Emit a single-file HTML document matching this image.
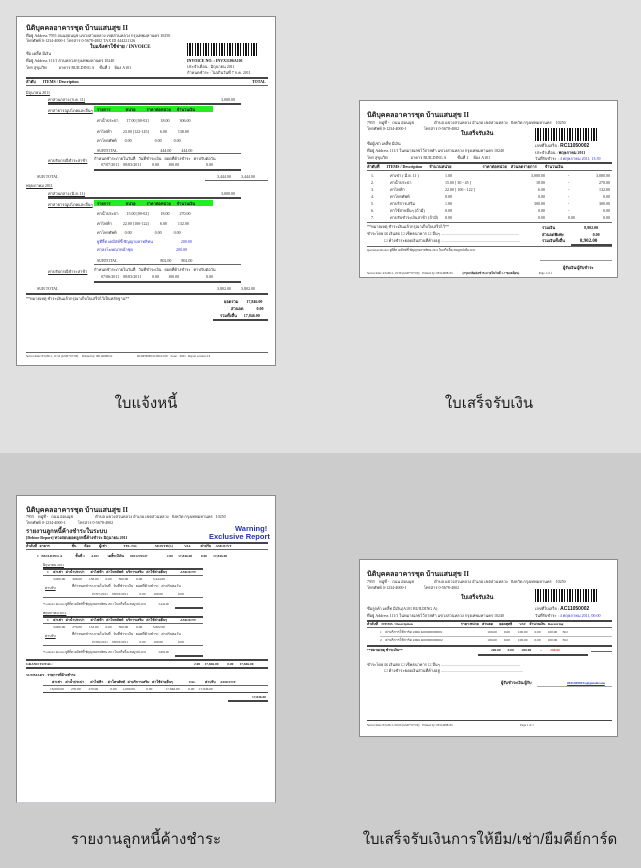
<!DOCTYPE html>
<html><head><meta charset="utf-8"><style>
*{margin:0;padding:0;box-sizing:border-box}
body{width:641px;height:868px;position:relative;overflow:hidden;background:#e0e0e0;font-family:"Liberation Serif",serif}
.bot{position:absolute;left:0;top:453px;width:641px;height:415px;background:#cccccc}
.doc{position:absolute;background:#fff;border:1px solid #8a8a8a;overflow:hidden}
.t{position:absolute;white-space:nowrap;font-size:4px;line-height:5px;color:#222}
.b{font-weight:bold;color:#111}
.h{position:absolute;font-size:7px;font-weight:bold;color:#222;white-space:nowrap}
.l{position:absolute;height:1px;background:#666}
.L{position:absolute;height:2px;background:#444}
.g{position:absolute;background:#22ee22}
.bc{position:absolute;background:repeating-linear-gradient(90deg,#111 0 1px,#fff 1px 2px,#111 2px 4px,#fff 4px 5px,#111 5px 6px,#fff 6px 8px)}
.lab{position:absolute;font-family:"Liberation Sans","DejaVu Sans",sans-serif;font-size:15px;color:#1a1a1a;text-align:center;width:260px}
.bl{color:#2a2acc}
</style></head><body>
<div class="bot"></div>

<!-- Doc 1 -->
<div class="doc" style="left:16px;top:16px;width:260px;height:350px">
<div class="h" style="left:9px;top:6px">นิติบุคคลอาคารชุด บ้านแสนสุข II</div>
<div class="t" style="left:9px;top:16px">ที่อยู่ Address 7955 ถนนอ่อนนุช แขวงสวนหลวง เขตสวนหลวง กรุงเทพมหานคร 10250</div>
<div class="t" style="left:9px;top:21px">โทรศัพท์ 0-1234-4000-1 โทรสาร 0-5678-4002 TAX ID 444221126</div>
<div class="bc" style="left:170px;top:26px;width:71px;height:13px"></div>
<div class="t b" style="left:73px;top:28px;font-size:5px">ใบแจ้งค่าใช้จ่าย / INVOICE</div>
<div class="t" style="left:9px;top:34px">ชื่อ เคลิ้ท มีเงิน</div>
<div class="t" style="left:9px;top:41px">ที่อยู่ Address 111/1 สวนหลวงกรุงเทพมหานคร 10240</div>
<div class="t" style="left:9px;top:48px">โทร สุขุมวิท &nbsp;&nbsp;&nbsp;&nbsp;&nbsp;&nbsp;&nbsp;&nbsp;&nbsp;&nbsp; อาคาร BUILDING A &nbsp;&nbsp;&nbsp; ชั้นที่ 1 &nbsp;&nbsp; ห้อง A101</div>
<div class="t b" style="left:170px;top:41px">INVOICE NO. : INVX1106A101</div>
<div class="t" style="left:170px;top:47px">ประจำเดือน : มิถุนายน 2011</div>
<div class="t" style="left:170px;top:53px">กำหนดชำระ : ไม่เกินวันที่ 7 ก.ค. 2011</div>
<div class="L" style="left:9px;top:60px;width:242px"></div>
<div class="t b" style="left:9px;top:62px">ลำดับ &nbsp;&nbsp;&nbsp;&nbsp;&nbsp; ITEMS / Description</div>
<div class="t b" style="left:235px;top:62px">TOTAL</div>
<div class="l" style="left:9px;top:68px;width:242px"></div>
<div class="t" style="left:9px;top:73px;text-decoration:underline">มิถุนายน 2011</div>
<div class="t" style="left:31px;top:80px;text-decoration:underline">ค่าส่วนกลาง (ก.ค. 11)</div>
<div class="t" style="left:204px;top:80px">3,000.00</div>
<div class="L" style="left:31px;top:86px;width:193px"></div>
<div class="t" style="left:31px;top:91px;text-decoration:underline">ค่าสาธารณูปโภคและอื่นๆ</div>
<div class="g" style="left:77px;top:89px;width:119px;height:6px"></div>
<div class="t b" style="left:80px;top:90px">รายการ &nbsp;&nbsp;&nbsp;&nbsp;&nbsp;&nbsp;&nbsp;&nbsp;&nbsp;&nbsp;&nbsp;&nbsp;&nbsp; หน่วย &nbsp;&nbsp;&nbsp;&nbsp;&nbsp;&nbsp;&nbsp;&nbsp;&nbsp; ราคาต่อหน่วย &nbsp;&nbsp;&nbsp;&nbsp; จำนวนเงิน</div>
<div class="t" style="left:80px;top:101px">ค่าน้ำประปา &nbsp;&nbsp;&nbsp;&nbsp;&nbsp;&nbsp; 17.00 [00-02] &nbsp;&nbsp;&nbsp;&nbsp;&nbsp;&nbsp;&nbsp;&nbsp;&nbsp;&nbsp; 18.00 &nbsp;&nbsp;&nbsp;&nbsp;&nbsp;&nbsp;&nbsp;&nbsp; 306.00</div>
<div class="t" style="left:80px;top:112px">ค่าไฟฟ้า &nbsp;&nbsp;&nbsp;&nbsp;&nbsp;&nbsp;&nbsp;&nbsp;&nbsp; 23.00 [122-145] &nbsp;&nbsp;&nbsp;&nbsp;&nbsp;&nbsp;&nbsp;&nbsp;&nbsp; 6.00 &nbsp;&nbsp;&nbsp;&nbsp;&nbsp;&nbsp;&nbsp;&nbsp;&nbsp; 138.00</div>
<div class="t" style="left:80px;top:121px">ค่าโทรศัพท์ &nbsp;&nbsp;&nbsp;&nbsp;&nbsp;&nbsp; 0.00 &nbsp;&nbsp;&nbsp;&nbsp;&nbsp;&nbsp;&nbsp;&nbsp;&nbsp;&nbsp;&nbsp;&nbsp;&nbsp;&nbsp;&nbsp;&nbsp;&nbsp;&nbsp;&nbsp;&nbsp;&nbsp; 0.00 &nbsp;&nbsp;&nbsp;&nbsp;&nbsp;&nbsp;&nbsp;&nbsp;&nbsp;&nbsp; 0.00</div>
<div class="t" style="left:80px;top:131px">SUBTOTAL &nbsp;&nbsp;&nbsp;&nbsp;&nbsp;&nbsp;&nbsp;&nbsp;&nbsp;&nbsp;&nbsp;&nbsp;&nbsp;&nbsp;&nbsp;&nbsp;&nbsp;&nbsp;&nbsp;&nbsp;&nbsp;&nbsp;&nbsp;&nbsp;&nbsp;&nbsp;&nbsp;&nbsp;&nbsp;&nbsp;&nbsp;&nbsp;&nbsp;&nbsp;&nbsp;&nbsp;&nbsp;&nbsp;&nbsp;&nbsp;&nbsp; 444.00 &nbsp;&nbsp;&nbsp;&nbsp;&nbsp;&nbsp;&nbsp;&nbsp; 444.00</div>
<div class="l" style="left:77px;top:136px;width:147px"></div>
<div class="t" style="left:31px;top:141px;text-decoration:underline">ค่าปรับกรณีชำระล่าช้า</div>
<div class="t" style="left:77px;top:139px">กำหนดชำระภายในวันที่ &nbsp; วันที่ชำระเงิน &nbsp; ยอดที่ค้างชำระ &nbsp; ค่าปรับต่อวัน</div>
<div class="t" style="left:84px;top:145px">07/07/2011 &nbsp;&nbsp; 08/03/2011 &nbsp;&nbsp;&nbsp;&nbsp;&nbsp;&nbsp;&nbsp;&nbsp;&nbsp; 0.00 &nbsp;&nbsp;&nbsp;&nbsp;&nbsp;&nbsp;&nbsp; 100.00 &nbsp;&nbsp;&nbsp;&nbsp;&nbsp;&nbsp;&nbsp;&nbsp;&nbsp;&nbsp;&nbsp;&nbsp;&nbsp;&nbsp;&nbsp;&nbsp;&nbsp;&nbsp;&nbsp;&nbsp;&nbsp;&nbsp;&nbsp;&nbsp;&nbsp; 0.00</div>
<div class="L" style="left:77px;top:152px;width:147px"></div>
<div class="t" style="left:20px;top:157px">SUB TOTAL</div>
<div class="t" style="left:200px;top:157px">3,444.00 &nbsp;&nbsp;&nbsp;&nbsp;&nbsp;&nbsp;&nbsp;&nbsp; 3,444.00</div>
<div class="l" style="left:188px;top:163px;width:63px"></div>
<div class="t" style="left:9px;top:166px;text-decoration:underline">พฤษภาคม 2011</div>
<div class="t" style="left:31px;top:174px;text-decoration:underline">ค่าส่วนกลาง (มิ.ย. 11)</div>
<div class="t" style="left:204px;top:174px">3,000.00</div>
<div class="L" style="left:31px;top:180px;width:193px"></div>
<div class="t" style="left:31px;top:185px;text-decoration:underline">ค่าสาธารณูปโภคและอื่นๆ</div>
<div class="g" style="left:77px;top:183px;width:119px;height:6px"></div>
<div class="t b" style="left:80px;top:184px">รายการ &nbsp;&nbsp;&nbsp;&nbsp;&nbsp;&nbsp;&nbsp;&nbsp;&nbsp;&nbsp;&nbsp;&nbsp;&nbsp; หน่วย &nbsp;&nbsp;&nbsp;&nbsp;&nbsp;&nbsp;&nbsp;&nbsp;&nbsp; ราคาต่อหน่วย &nbsp;&nbsp;&nbsp;&nbsp; จำนวนเงิน</div>
<div class="t" style="left:80px;top:194px">ค่าน้ำประปา &nbsp;&nbsp;&nbsp;&nbsp;&nbsp;&nbsp; 15.00 [00-02] &nbsp;&nbsp;&nbsp;&nbsp;&nbsp;&nbsp;&nbsp;&nbsp;&nbsp;&nbsp; 18.00 &nbsp;&nbsp;&nbsp;&nbsp;&nbsp;&nbsp;&nbsp;&nbsp; 270.00</div>
<div class="t" style="left:80px;top:204px">ค่าไฟฟ้า &nbsp;&nbsp;&nbsp;&nbsp;&nbsp;&nbsp;&nbsp;&nbsp;&nbsp; 22.00 [100-122] &nbsp;&nbsp;&nbsp;&nbsp;&nbsp;&nbsp;&nbsp;&nbsp;&nbsp; 6.00 &nbsp;&nbsp;&nbsp;&nbsp;&nbsp;&nbsp;&nbsp;&nbsp;&nbsp; 132.00</div>
<div class="t" style="left:80px;top:213px">ค่าโทรศัพท์ &nbsp;&nbsp;&nbsp;&nbsp;&nbsp;&nbsp; 0.00 &nbsp;&nbsp;&nbsp;&nbsp;&nbsp;&nbsp;&nbsp;&nbsp;&nbsp;&nbsp;&nbsp;&nbsp;&nbsp;&nbsp;&nbsp;&nbsp;&nbsp;&nbsp;&nbsp;&nbsp;&nbsp; 0.00 &nbsp;&nbsp;&nbsp;&nbsp;&nbsp;&nbsp;&nbsp;&nbsp;&nbsp;&nbsp; 0.00</div>
<div class="t bl" style="left:80px;top:222px">ยูทีลิ้ท เคมีสท์ขี้ ซัญญาผลาทลิทน &nbsp;&nbsp;&nbsp;&nbsp;&nbsp;&nbsp;&nbsp;&nbsp;&nbsp;&nbsp;&nbsp;&nbsp;&nbsp;&nbsp;&nbsp;&nbsp;&nbsp;&nbsp;&nbsp;&nbsp;&nbsp;&nbsp;&nbsp;&nbsp;&nbsp;&nbsp; 200.00</div>
<div class="t bl" style="left:80px;top:230px">ค่าลงโฆษณาหน้าชุด &nbsp;&nbsp;&nbsp;&nbsp;&nbsp;&nbsp;&nbsp;&nbsp;&nbsp;&nbsp;&nbsp;&nbsp;&nbsp;&nbsp;&nbsp;&nbsp;&nbsp;&nbsp;&nbsp;&nbsp;&nbsp;&nbsp;&nbsp;&nbsp;&nbsp;&nbsp;&nbsp;&nbsp;&nbsp;&nbsp;&nbsp;&nbsp;&nbsp;&nbsp;&nbsp;&nbsp;&nbsp;&nbsp;&nbsp;&nbsp;&nbsp; 200.00</div>
<div class="t" style="left:80px;top:241px">SUBTOTAL &nbsp;&nbsp;&nbsp;&nbsp;&nbsp;&nbsp;&nbsp;&nbsp;&nbsp;&nbsp;&nbsp;&nbsp;&nbsp;&nbsp;&nbsp;&nbsp;&nbsp;&nbsp;&nbsp;&nbsp;&nbsp;&nbsp;&nbsp;&nbsp;&nbsp;&nbsp;&nbsp;&nbsp;&nbsp;&nbsp;&nbsp;&nbsp;&nbsp;&nbsp;&nbsp;&nbsp;&nbsp;&nbsp;&nbsp;&nbsp;&nbsp; 802.00 &nbsp;&nbsp;&nbsp;&nbsp;&nbsp;&nbsp;&nbsp;&nbsp; 802.00</div>
<div class="l" style="left:77px;top:247px;width:147px"></div>
<div class="t" style="left:31px;top:252px;text-decoration:underline">ค่าปรับกรณีชำระล่าช้า</div>
<div class="t" style="left:77px;top:250px">กำหนดชำระภายในวันที่ &nbsp; วันที่ชำระเงิน &nbsp; ยอดที่ค้างชำระ &nbsp; ค่าปรับต่อวัน</div>
<div class="t" style="left:84px;top:257px">07/06/2011 &nbsp;&nbsp; 08/03/2011 &nbsp;&nbsp;&nbsp;&nbsp;&nbsp;&nbsp;&nbsp;&nbsp;&nbsp; 0.00 &nbsp;&nbsp;&nbsp;&nbsp;&nbsp;&nbsp;&nbsp; 100.00 &nbsp;&nbsp;&nbsp;&nbsp;&nbsp;&nbsp;&nbsp;&nbsp;&nbsp;&nbsp;&nbsp;&nbsp;&nbsp;&nbsp;&nbsp;&nbsp;&nbsp;&nbsp;&nbsp;&nbsp;&nbsp;&nbsp;&nbsp;&nbsp;&nbsp; 0.00</div>
<div class="L" style="left:77px;top:264px;width:147px"></div>
<div class="t" style="left:20px;top:269px">SUB TOTAL</div>
<div class="t" style="left:200px;top:269px">3,802.00 &nbsp;&nbsp;&nbsp;&nbsp;&nbsp;&nbsp;&nbsp;&nbsp; 3,802.00</div>
<div class="L" style="left:9px;top:276px;width:242px"></div>
<div class="t" style="left:9px;top:279px">**หมายเหตุ ชำระเงินแล้วกรุณาเก็บใบเสร็จไว้เป็นหลักฐาน**</div>
<div class="t b" style="left:207px;top:282px">ยอดรวม &nbsp;&nbsp;&nbsp;&nbsp;&nbsp;&nbsp; 17,846.00</div>
<div class="t b" style="left:214px;top:289px">ส่วนลด &nbsp;&nbsp;&nbsp;&nbsp;&nbsp;&nbsp;&nbsp;&nbsp;&nbsp;&nbsp;&nbsp; 0.00</div>
<div class="t b" style="left:203px;top:296px">รวมทั้งสิ้น &nbsp;&nbsp;&nbsp;&nbsp;&nbsp; 17,846.00</div>
<div class="L" style="left:196px;top:302px;width:55px"></div>
<div class="l" style="left:9px;top:335px;width:242px"></div>
<div class="t" style="left:9px;top:337px;font-size:3px">Server time: 8/3/2011, 11:52 (GMT+07:00) &nbsp;&nbsp;&nbsp; Printed by: 0811409815x &nbsp;&nbsp;&nbsp;&nbsp;&nbsp;&nbsp;&nbsp;&nbsp;&nbsp;&nbsp;&nbsp;&nbsp;&nbsp;&nbsp;&nbsp;&nbsp;&nbsp;&nbsp;&nbsp;&nbsp;&nbsp;&nbsp;&nbsp;&nbsp;&nbsp;&nbsp;&nbsp;&nbsp;&nbsp;&nbsp;&nbsp; RCDF0000011/0001/108 &nbsp;&nbsp; Zone: &nbsp; 0001 &nbsp; Report version 2.0</div>
</div>

<!-- Doc 2 -->
<div class="doc" style="left:359px;top:100px;width:259px;height:178px">
<div class="h" style="left:7px;top:9px">นิติบุคคลอาคารชุด บ้านแสนสุข II</div>
<div class="t" style="left:7px;top:19px">7955 &nbsp;&nbsp; หมู่ที่ - &nbsp; ถนน อ่อนนุช &nbsp;&nbsp;&nbsp;&nbsp;&nbsp;&nbsp;&nbsp;&nbsp;&nbsp;&nbsp;&nbsp;&nbsp;&nbsp;&nbsp;&nbsp;&nbsp;&nbsp;&nbsp; ตำบล แขวงสวนหลวง อำเภอ เขตสวนหลวง &nbsp; จังหวัด กรุงเทพมหานคร &nbsp;&nbsp; 10250</div>
<div class="t" style="left:7px;top:25px">โทรศัพท์ 0-1234-4000-1 &nbsp;&nbsp;&nbsp;&nbsp;&nbsp;&nbsp;&nbsp;&nbsp;&nbsp;&nbsp;&nbsp;&nbsp;&nbsp;&nbsp;&nbsp; โทรสาร 0-5678-4002</div>
<div class="bc" style="left:175px;top:27px;width:64px;height:13px"></div>
<div class="t b" style="left:101px;top:31px;font-size:5.5px">ใบเสร็จรับเงิน</div>
<div class="t" style="left:7px;top:40px">ชื่อผู้เช่า เคลิ้ท มีเงิน</div>
<div class="t" style="left:7px;top:47px">ที่อยู่ Address 111/1 ในหมายเลขไว้ถ่ายทำ แขวงสวนหลวง กรุงเทพมหานคร 10240</div>
<div class="t" style="left:7px;top:54px">โทร สุขุมวิท &nbsp;&nbsp;&nbsp;&nbsp;&nbsp;&nbsp;&nbsp;&nbsp;&nbsp;&nbsp;&nbsp;&nbsp;&nbsp;&nbsp;&nbsp;&nbsp;&nbsp;&nbsp;&nbsp;&nbsp;&nbsp; อาคาร BUILDING A &nbsp;&nbsp;&nbsp;&nbsp;&nbsp;&nbsp;&nbsp;&nbsp;&nbsp; ชั้นที่ 1 &nbsp;&nbsp;&nbsp; ห้อง A101</div>
<div class="t" style="left:175px;top:42px">เลขที่ใบเสร็จ : <b style="font-family:'Liberation Sans';font-size:5px;color:#111">RC11050002</b></div>
<div class="t" style="left:175px;top:49px">ประจำเดือน : <b>พฤษภาคม 2011</b></div>
<div class="t" style="left:175px;top:55px">วันที่รับชำระ : <span class="bl">4 พฤษภาคม 2011, 13:39</span></div>
<div class="L" style="left:7px;top:61px;width:245px"></div>
<div class="t b" style="left:7px;top:63px">ลำดับที่ &nbsp;&nbsp;&nbsp;&nbsp;&nbsp; ITEMS / Description &nbsp;&nbsp;&nbsp;&nbsp;&nbsp; จำนวนหน่วย &nbsp;&nbsp;&nbsp;&nbsp;&nbsp;&nbsp;&nbsp;&nbsp;&nbsp;&nbsp;&nbsp;&nbsp;&nbsp;&nbsp;&nbsp;&nbsp;&nbsp;&nbsp;&nbsp;&nbsp;&nbsp;&nbsp;&nbsp;&nbsp;&nbsp;&nbsp;&nbsp;&nbsp;&nbsp; ราคาต่อหน่วย &nbsp;&nbsp; ส่วนลดรายการ &nbsp;&nbsp;&nbsp;&nbsp;&nbsp;&nbsp; จำนวนเงิน</div>
<div class="l" style="left:7px;top:69px;width:245px"></div>
<div class="t" style="left:11px;top:71px;line-height:7px">1.<br>2.<br>3.<br>4.<br>5.<br>6.<br>7.</div>
<div class="t" style="left:30px;top:71px;line-height:7px">ค่าเช่า ( มี.ย. 11 )<br>ค่าน้ำประปา<br>ค่าไฟฟ้า<br>ค่าโทรศัพท์<br>ค่าบริการเสริม<br>ค่าใช้จ่ายอื่นๆ (ถ้ามี)<br>ค่าปรับชำระเงินล่าช้า (ถ้ามี)</div>
<div class="t" style="left:85px;top:71px;line-height:7px">1.00<br>15.00 [ 30 - 45 ]<br>22.00 [ 100 - 122 ]<br>0.00<br>1.00<br>0.00<br>0.00</div>
<div class="t" style="left:165px;top:71px;line-height:7px;text-align:right;width:20px">3,000.00<br>18.00<br>6.00<br>0.00<br>300.00<br>0.00<br>0.00</div>
<div class="t" style="left:208px;top:71px;line-height:7px">-<br>-<br>-<br>-<br>-<br>-<br>0.00</div>
<div class="t" style="left:230px;top:71px;line-height:7px;text-align:right;width:20px">3,000.00<br>270.00<br>132.00<br>0.00<br>300.00<br>0.00<br>0.00</div>
<div class="l" style="left:7px;top:121px;width:245px"></div>
<div class="t" style="left:7px;top:123px">**หมายเหตุ ชำระเงินแล้วกรุณาเก็บใบเสร็จไว้**</div>
<div class="t" style="left:7px;top:130px">ชำระโดย ☒ เงินสด ☐ เช็คธนาคาร ☐ อื่นๆ ..............................................................................</div>
<div class="t" style="left:24px;top:137px">☐ ค้างชำระยอดเงินส่วนที่ค้างอยู่ ...............................................................................</div>
<div class="t b" style="left:182px;top:124px">รวมเงิน &nbsp;&nbsp;&nbsp;&nbsp;&nbsp;&nbsp;&nbsp;&nbsp;&nbsp;&nbsp;&nbsp;&nbsp;&nbsp;&nbsp;&nbsp;&nbsp;&nbsp;&nbsp;&nbsp;&nbsp;&nbsp;&nbsp;&nbsp;&nbsp;&nbsp;&nbsp;&nbsp; 8,902.00</div>
<div class="t b" style="left:182px;top:131px">ส่วนลดพิเศษ &nbsp;&nbsp;&nbsp;&nbsp;&nbsp;&nbsp;&nbsp;&nbsp;&nbsp;&nbsp;&nbsp;&nbsp;&nbsp;&nbsp;&nbsp;&nbsp;&nbsp;&nbsp;&nbsp;&nbsp;&nbsp;&nbsp;&nbsp;&nbsp;&nbsp;&nbsp;&nbsp; 0.00</div>
<div class="t b" style="left:182px;top:137px">รวมเงินทั้งสิ้น &nbsp;&nbsp;&nbsp;&nbsp;&nbsp;&nbsp;&nbsp;&nbsp;&nbsp;&nbsp;&nbsp;&nbsp;&nbsp; <span style="font-size:5px">8,902.00</span></div>
<div class="L" style="left:211px;top:143px;width:41px"></div>
<div class="l" style="left:7px;top:145px;width:245px"></div>
<div class="t" style="left:7px;top:147px;font-size:3px">Quotation/Invoice ยูทีลิ้ท เคมีสท์ขี้ ซัญญาผลาทลิทน 2011 ใบเสร็จนี้จะสมบูรณ์เมื่อ 2011</div>
<div class="l" style="left:180px;top:159px;width:72px;background:#999"></div>
<div class="t b" style="left:203px;top:164px">ผู้รับเงิน/ผู้รับชำระ</div>
<div class="t" style="left:7px;top:170px;font-size:3px">Server time: 4/5/2011, 13:39 (GMT+07:00) &nbsp;&nbsp; Printed by: 0811409815x &nbsp;&nbsp;&nbsp;&nbsp;&nbsp;&nbsp;&nbsp;&nbsp;&nbsp;&nbsp;&nbsp; <b>(กรุณาติดต่อชำระภายในวันที่ 1-7 ของเดือน)</b> &nbsp;&nbsp;&nbsp;&nbsp;&nbsp;&nbsp;&nbsp;&nbsp;&nbsp;&nbsp;&nbsp;&nbsp;&nbsp;&nbsp;&nbsp;&nbsp;&nbsp;&nbsp;&nbsp;&nbsp;&nbsp;&nbsp;&nbsp;&nbsp; Page 1 of 1</div>
</div>

<div class="lab" style="left:16px;top:391px">ใบแจ้งหนี้</div>
<div class="lab" style="left:359px;top:391px">ใบเสร็จรับเงิน</div>

<!-- Doc 3 -->
<div class="doc" style="left:16px;top:495px;width:260px;height:308px;border-bottom-color:#ccd">
<div class="h" style="left:9px;top:9px">นิติบุคคลอาคารชุด บ้านแสนสุข II</div>
<div class="t" style="left:9px;top:18px">7955 &nbsp;&nbsp; หมู่ที่ - &nbsp; ถนน อ่อนนุช &nbsp;&nbsp;&nbsp;&nbsp;&nbsp;&nbsp;&nbsp;&nbsp;&nbsp;&nbsp;&nbsp;&nbsp;&nbsp;&nbsp;&nbsp;&nbsp;&nbsp;&nbsp;&nbsp;&nbsp; ตำบล แขวงสวนหลวง อำเภอ เขตสวนหลวง &nbsp; จังหวัด กรุงเทพมหานคร &nbsp; 10250</div>
<div class="t" style="left:9px;top:24px">โทรศัพท์ 0-1234-4000-1 &nbsp;&nbsp;&nbsp;&nbsp;&nbsp;&nbsp;&nbsp;&nbsp;&nbsp;&nbsp; โทรสาร 0-5678-4002</div>
<div class="h" style="left:9px;top:30px;font-size:6px">รายงานลูกหนี้ค้างชำระในระบบ</div>
<div class="t b" style="left:9px;top:39px">[Debtor Report] ทวงสอบยอดลูกหนี้ค้างชำระ มิถุนายน 2011</div>
<div class="t" style="left:218px;top:29px;font-family:'Liberation Sans',sans-serif;font-size:7.5px;line-height:8px;font-weight:bold;color:#2233aa">Warning!</div>
<div class="t" style="left:192px;top:37px;font-family:'Liberation Sans',sans-serif;font-size:7.5px;line-height:8px;font-weight:bold;color:#2233aa">Exclusive Report</div>
<div class="L" style="left:9px;top:46px;width:242px"></div>
<div class="t b" style="left:9px;top:48px;font-size:3.5px">ลำดับที่ &nbsp; อาคาร &nbsp;&nbsp;&nbsp;&nbsp;&nbsp;&nbsp;&nbsp;&nbsp;&nbsp;&nbsp;&nbsp;&nbsp;&nbsp;&nbsp;&nbsp;&nbsp;&nbsp;&nbsp;&nbsp;&nbsp;&nbsp;&nbsp;&nbsp; ชั้น &nbsp;&nbsp;&nbsp;&nbsp;&nbsp;&nbsp;&nbsp; ห้อง &nbsp;&nbsp;&nbsp;&nbsp;&nbsp;&nbsp;&nbsp;&nbsp; ผู้เช่า &nbsp;&nbsp;&nbsp;&nbsp;&nbsp;&nbsp;&nbsp;&nbsp;&nbsp;&nbsp;&nbsp;&nbsp;&nbsp;&nbsp;&nbsp;&nbsp;&nbsp; TEL.NO. &nbsp;&nbsp;&nbsp;&nbsp;&nbsp;&nbsp;&nbsp;&nbsp;&nbsp;&nbsp;&nbsp;&nbsp;&nbsp;&nbsp;&nbsp;&nbsp;&nbsp;&nbsp; MONTH(S) &nbsp;&nbsp;&nbsp;&nbsp;&nbsp;&nbsp;&nbsp;&nbsp;&nbsp;&nbsp;&nbsp; VAL &nbsp;&nbsp;&nbsp;&nbsp;&nbsp;&nbsp;&nbsp;&nbsp;&nbsp; ค่าปรับ &nbsp;&nbsp;&nbsp; AMOUNT</div>
<div class="l" style="left:9px;top:53px;width:242px"></div>
<div class="t b" style="left:20px;top:58px;font-size:3.5px">1 &nbsp; BUILDING A &nbsp;&nbsp;&nbsp;&nbsp;&nbsp;&nbsp;&nbsp;&nbsp;&nbsp;&nbsp;&nbsp;&nbsp;&nbsp; ชั้นที่ 1 &nbsp;&nbsp;&nbsp;&nbsp;&nbsp; A101 &nbsp;&nbsp;&nbsp;&nbsp;&nbsp;&nbsp;&nbsp;&nbsp; เคลิ้ท มีเงิน &nbsp;&nbsp;&nbsp;&nbsp;&nbsp; 0811276547 &nbsp;&nbsp;&nbsp;&nbsp;&nbsp;&nbsp;&nbsp;&nbsp;&nbsp;&nbsp;&nbsp;&nbsp;&nbsp;&nbsp;&nbsp;&nbsp;&nbsp;&nbsp;&nbsp;&nbsp; 2.00 &nbsp;&nbsp;&nbsp;&nbsp; 17,846.00 &nbsp;&nbsp;&nbsp;&nbsp;&nbsp;&nbsp;&nbsp;&nbsp; 0.00 &nbsp;&nbsp;&nbsp;&nbsp;&nbsp; 17,846.00</div>
<div class="t" style="left:26px;top:67px;font-size:3.5px;text-decoration:underline">มิถุนายน 2011</div>
<div class="L" style="left:26px;top:72px;width:160px"></div>
<div class="t b" style="left:30px;top:74px;font-size:3.5px">1 &nbsp;&nbsp;&nbsp; ค่าเช่า &nbsp; ค่าน้ำประปา &nbsp;&nbsp;&nbsp;&nbsp;&nbsp; ค่าไฟฟ้า &nbsp; ค่าโทรศัพท์ &nbsp; บริการเสริม &nbsp; ค่าใช้จ่ายอื่นๆ &nbsp;&nbsp;&nbsp;&nbsp;&nbsp;&nbsp;&nbsp;&nbsp;&nbsp;&nbsp;&nbsp;&nbsp;&nbsp; AMOUNT</div>
<div class="l" style="left:26px;top:79px;width:160px"></div>
<div class="t" style="left:36px;top:81px;font-size:3.5px">3,000.00 &nbsp;&nbsp;&nbsp;&nbsp;&nbsp;&nbsp; 306.00 &nbsp;&nbsp;&nbsp;&nbsp;&nbsp;&nbsp; 138.00 &nbsp;&nbsp;&nbsp;&nbsp;&nbsp;&nbsp; 0.00 &nbsp;&nbsp;&nbsp;&nbsp;&nbsp;&nbsp; 300.00 &nbsp;&nbsp;&nbsp;&nbsp;&nbsp;&nbsp;&nbsp; 0.00 &nbsp;&nbsp;&nbsp;&nbsp;&nbsp;&nbsp;&nbsp;&nbsp;&nbsp;&nbsp; 3,444.00</div>
<div class="t" style="left:28px;top:90px;font-size:3.5px;text-decoration:underline">ค่าปรับ</div>
<div class="t" style="left:55px;top:88px;font-size:3.5px">ที่กำหนดชำระภายในวันที่ &nbsp; วันที่ชำระเงิน &nbsp; ยอดที่ค้างชำระ &nbsp; ค่าปรับต่อวัน</div>
<div class="t" style="left:75px;top:96px;font-size:3.5px">07/07/2011 &nbsp;&nbsp;&nbsp; 08/03/2011 &nbsp;&nbsp;&nbsp;&nbsp;&nbsp;&nbsp;&nbsp;&nbsp;&nbsp;&nbsp;&nbsp; 0.00 &nbsp;&nbsp;&nbsp;&nbsp;&nbsp;&nbsp;&nbsp; 100.00 &nbsp;&nbsp;&nbsp;&nbsp;&nbsp;&nbsp;&nbsp;&nbsp;&nbsp;&nbsp;&nbsp;&nbsp;&nbsp;&nbsp;&nbsp; 0.00</div>
<div class="l" style="left:26px;top:101px;width:160px"></div>
<div class="t" style="left:26px;top:106px;font-size:3px">*Contract Invoice ยูทีลิ้ท เคมีสท์ขี้ ซัญญาผลาทลิทน 2011 ใบเสร็จนี้จะสมบูรณ์ 2011 &nbsp;&nbsp;&nbsp;&nbsp;&nbsp;&nbsp;&nbsp;&nbsp;&nbsp;&nbsp;&nbsp;&nbsp;&nbsp;&nbsp; 3,444.00</div>
<div class="L" style="left:158px;top:111px;width:28px"></div>
<div class="t" style="left:26px;top:115px;font-size:3.5px;text-decoration:underline">พฤษภาคม 2011</div>
<div class="L" style="left:26px;top:120px;width:160px"></div>
<div class="t b" style="left:30px;top:122px;font-size:3.5px">1 &nbsp;&nbsp;&nbsp; ค่าเช่า &nbsp; ค่าน้ำประปา &nbsp;&nbsp;&nbsp;&nbsp;&nbsp; ค่าไฟฟ้า &nbsp; ค่าโทรศัพท์ &nbsp; บริการเสริม &nbsp; ค่าใช้จ่ายอื่นๆ &nbsp;&nbsp;&nbsp;&nbsp;&nbsp;&nbsp;&nbsp;&nbsp;&nbsp;&nbsp;&nbsp;&nbsp;&nbsp; AMOUNT</div>
<div class="l" style="left:26px;top:127px;width:160px"></div>
<div class="t" style="left:36px;top:129px;font-size:3.5px">3,000.00 &nbsp;&nbsp;&nbsp;&nbsp;&nbsp;&nbsp; 270.00 &nbsp;&nbsp;&nbsp;&nbsp;&nbsp;&nbsp; 132.00 &nbsp;&nbsp;&nbsp;&nbsp;&nbsp;&nbsp; 0.00 &nbsp;&nbsp;&nbsp;&nbsp;&nbsp;&nbsp; 300.00 &nbsp;&nbsp;&nbsp;&nbsp;&nbsp;&nbsp;&nbsp; 0.00 &nbsp;&nbsp;&nbsp;&nbsp;&nbsp;&nbsp;&nbsp;&nbsp;&nbsp;&nbsp; 3,802.00</div>
<div class="t" style="left:28px;top:138px;font-size:3.5px;text-decoration:underline">ค่าปรับ</div>
<div class="t" style="left:55px;top:136px;font-size:3.5px">ที่กำหนดชำระภายในวันที่ &nbsp; วันที่ชำระเงิน &nbsp; ยอดที่ค้างชำระ &nbsp; ค่าปรับต่อวัน</div>
<div class="t" style="left:75px;top:144px;font-size:3.5px">07/06/2011 &nbsp;&nbsp;&nbsp; 08/03/2011 &nbsp;&nbsp;&nbsp;&nbsp;&nbsp;&nbsp;&nbsp;&nbsp;&nbsp;&nbsp;&nbsp; 0.00 &nbsp;&nbsp;&nbsp;&nbsp;&nbsp;&nbsp;&nbsp; 100.00 &nbsp;&nbsp;&nbsp;&nbsp;&nbsp;&nbsp;&nbsp;&nbsp;&nbsp;&nbsp;&nbsp;&nbsp;&nbsp;&nbsp;&nbsp; 0.00</div>
<div class="l" style="left:26px;top:149px;width:160px"></div>
<div class="t" style="left:26px;top:154px;font-size:3px">*Contract Invoice ยูทีลิ้ท เคมีสท์ขี้ ซัญญาผลาทลิทน 2011 ใบเสร็จนี้จะสมบูรณ์ 2011 &nbsp;&nbsp;&nbsp;&nbsp;&nbsp;&nbsp;&nbsp;&nbsp;&nbsp;&nbsp;&nbsp;&nbsp;&nbsp;&nbsp; 3,802.00</div>
<div class="L" style="left:158px;top:159px;width:28px"></div>
<div class="L" style="left:9px;top:163px;width:242px"></div>
<div class="t b" style="left:9px;top:166px;font-size:3.5px">GRAND TOTAL:</div>
<div class="t b" style="left:177px;top:166px;font-size:3.5px">2.00 &nbsp;&nbsp;&nbsp; 17,846.00 &nbsp;&nbsp;&nbsp;&nbsp;&nbsp;&nbsp;&nbsp;&nbsp; 0.00 &nbsp;&nbsp;&nbsp;&nbsp;&nbsp; 17,846.00</div>
<div class="L" style="left:9px;top:171px;width:242px"></div>
<div class="t b" style="left:9px;top:177px;font-size:3.5px">SUMMARY - รายการที่ค้างชำระ</div>
<div class="t b" style="left:35px;top:184px;font-size:3.5px">ค่าเช่า &nbsp;&nbsp; ค่าน้ำประปา &nbsp;&nbsp;&nbsp;&nbsp;&nbsp; ค่าไฟฟ้า &nbsp;&nbsp;&nbsp; ค่าโทรศัพท์ &nbsp; ค่าบริการเสริม &nbsp; ค่าใช้จ่ายอื่นๆ &nbsp;&nbsp;&nbsp;&nbsp;&nbsp;&nbsp;&nbsp;&nbsp;&nbsp;&nbsp;&nbsp;&nbsp;&nbsp;&nbsp;&nbsp;&nbsp; VAL &nbsp;&nbsp;&nbsp;&nbsp;&nbsp;&nbsp;&nbsp;&nbsp;&nbsp; ค่าปรับ &nbsp;&nbsp;&nbsp; AMOUNT</div>
<div class="l" style="left:26px;top:189px;width:225px"></div>
<div class="t" style="left:33px;top:191px;font-size:3.5px">18,000.00 &nbsp;&nbsp;&nbsp;&nbsp;&nbsp;&nbsp; 270.00 &nbsp;&nbsp;&nbsp;&nbsp;&nbsp;&nbsp;&nbsp; 270.00 &nbsp;&nbsp;&nbsp;&nbsp;&nbsp;&nbsp;&nbsp;&nbsp;&nbsp;&nbsp;&nbsp;&nbsp; 0.00 &nbsp;&nbsp;&nbsp;&nbsp;&nbsp; 1,000.00 &nbsp;&nbsp;&nbsp;&nbsp;&nbsp;&nbsp;&nbsp;&nbsp;&nbsp;&nbsp;&nbsp; 0.00 &nbsp;&nbsp;&nbsp;&nbsp;&nbsp;&nbsp;&nbsp;&nbsp;&nbsp;&nbsp;&nbsp;&nbsp;&nbsp; 17,846.00 &nbsp;&nbsp;&nbsp;&nbsp;&nbsp;&nbsp;&nbsp;&nbsp; 0.00 &nbsp;&nbsp;&nbsp; 17,846.00</div>
<div class="L" style="left:26px;top:196px;width:225px;height:1px"></div>
<div class="t b" style="left:235px;top:199px;font-size:3.5px">17,846.00</div>
<div class="L" style="left:211px;top:204px;width:40px"></div>
</div>

<!-- Doc 4 -->
<div class="doc" style="left:359px;top:559px;width:259px;height:178px">
<div class="h" style="left:7px;top:9px">นิติบุคคลอาคารชุด บ้านแสนสุข II</div>
<div class="t" style="left:7px;top:19px">7955 &nbsp;&nbsp; หมู่ที่ - &nbsp; ถนน อ่อนนุช &nbsp;&nbsp;&nbsp;&nbsp;&nbsp;&nbsp;&nbsp;&nbsp;&nbsp;&nbsp;&nbsp;&nbsp;&nbsp;&nbsp;&nbsp;&nbsp;&nbsp;&nbsp; ตำบล แขวงสวนหลวง อำเภอ เขตสวนหลวง &nbsp; จังหวัด กรุงเทพมหานคร &nbsp;&nbsp; 10250</div>
<div class="t" style="left:7px;top:25px">โทรศัพท์ 0-1234-4000-1 &nbsp;&nbsp;&nbsp;&nbsp;&nbsp;&nbsp;&nbsp;&nbsp;&nbsp;&nbsp;&nbsp;&nbsp;&nbsp;&nbsp;&nbsp; โทรสาร 0-5678-4002</div>
<div class="bc" style="left:175px;top:29px;width:64px;height:13px"></div>
<div class="t b" style="left:101px;top:36px;font-size:5.5px">ใบเสร็จรับเงิน</div>
<div class="t" style="left:7px;top:46px">ชื่อลูกค้า เคลิ้ท มีเงิน(A101 BUILDING A)</div>
<div class="t" style="left:7px;top:53px">ที่อยู่ Address 111/1 ในหมายเลขไว้ถ่ายทำ แขวงสวนหลวง กรุงเทพมหานคร 10240</div>
<div class="t" style="left:175px;top:46px">เลขที่ใบเสร็จ : <b style="font-family:'Liberation Sans';font-size:5px;color:#111">AC11050002</b></div>
<div class="t" style="left:175px;top:53px">วันที่รับชำระ : <span class="bl">4 พฤษภาคม 2011, 00:00</span></div>
<div class="L" style="left:7px;top:60px;width:245px"></div>
<div class="t b" style="left:7px;top:62px;font-size:3.5px">ลำดับที่ &nbsp;&nbsp; ITEMS / Description &nbsp;&nbsp;&nbsp;&nbsp;&nbsp;&nbsp;&nbsp;&nbsp;&nbsp;&nbsp;&nbsp;&nbsp;&nbsp;&nbsp;&nbsp;&nbsp;&nbsp;&nbsp;&nbsp;&nbsp;&nbsp;&nbsp;&nbsp;&nbsp;&nbsp;&nbsp;&nbsp;&nbsp;&nbsp;&nbsp;&nbsp;&nbsp;&nbsp;&nbsp;&nbsp;&nbsp;&nbsp;&nbsp;&nbsp;&nbsp;&nbsp;&nbsp;&nbsp;&nbsp;&nbsp;&nbsp;&nbsp;&nbsp;&nbsp;&nbsp;&nbsp;&nbsp;&nbsp; ราคา/หน่วย &nbsp;&nbsp; ส่วนลด &nbsp;&nbsp;&nbsp;&nbsp;&nbsp; ยอดสุทธิ &nbsp;&nbsp;&nbsp;&nbsp;&nbsp;&nbsp; VAT &nbsp;&nbsp; จำนวนเงิน &nbsp; Recurring</div>
<div class="l" style="left:7px;top:67px;width:245px"></div>
<div class="t" style="left:20px;top:70px;font-size:3.5px">1 &nbsp;&nbsp; ค่าบริการใช้การ์ด #ID# K00000000001 &nbsp;&nbsp;&nbsp;&nbsp;&nbsp;&nbsp;&nbsp;&nbsp;&nbsp;&nbsp;&nbsp;&nbsp;&nbsp;&nbsp;&nbsp;&nbsp;&nbsp;&nbsp;&nbsp;&nbsp;&nbsp;&nbsp;&nbsp;&nbsp;&nbsp;&nbsp;&nbsp;&nbsp;&nbsp;&nbsp;&nbsp;&nbsp;&nbsp;&nbsp;&nbsp;&nbsp;&nbsp;&nbsp;&nbsp;&nbsp;&nbsp;&nbsp;&nbsp;&nbsp;&nbsp;&nbsp;&nbsp;&nbsp;&nbsp; 100.00 &nbsp;&nbsp;&nbsp;&nbsp;&nbsp;&nbsp; 0.00 &nbsp;&nbsp;&nbsp;&nbsp;&nbsp;&nbsp;&nbsp; 100.00 &nbsp;&nbsp;&nbsp;&nbsp;&nbsp;&nbsp; 0.00 &nbsp;&nbsp;&nbsp;&nbsp;&nbsp;&nbsp; 100.00 &nbsp;&nbsp;&nbsp;&nbsp; NO</div>
<div class="l" style="left:20px;top:76px;width:232px;background:#bbb"></div>
<div class="t" style="left:20px;top:78px;font-size:3.5px">2 &nbsp;&nbsp; ค่าบริการใช้การ์ด #ID# K00000000002 &nbsp;&nbsp;&nbsp;&nbsp;&nbsp;&nbsp;&nbsp;&nbsp;&nbsp;&nbsp;&nbsp;&nbsp;&nbsp;&nbsp;&nbsp;&nbsp;&nbsp;&nbsp;&nbsp;&nbsp;&nbsp;&nbsp;&nbsp;&nbsp;&nbsp;&nbsp;&nbsp;&nbsp;&nbsp;&nbsp;&nbsp;&nbsp;&nbsp;&nbsp;&nbsp;&nbsp;&nbsp;&nbsp;&nbsp;&nbsp;&nbsp;&nbsp;&nbsp;&nbsp;&nbsp;&nbsp;&nbsp;&nbsp;&nbsp; 100.00 &nbsp;&nbsp;&nbsp;&nbsp;&nbsp;&nbsp; 0.00 &nbsp;&nbsp;&nbsp;&nbsp;&nbsp;&nbsp;&nbsp; 100.00 &nbsp;&nbsp;&nbsp;&nbsp;&nbsp;&nbsp; 0.00 &nbsp;&nbsp;&nbsp;&nbsp;&nbsp;&nbsp; 100.00 &nbsp;&nbsp;&nbsp;&nbsp; NO</div>
<div class="L" style="left:7px;top:85px;width:245px"></div>
<div class="t b" style="left:7px;top:88px;font-size:3.5px">**หมายเหตุ ชำระเงิน**</div>
<div class="t b" style="left:131px;top:88px;font-size:3.5px">200.00 &nbsp;&nbsp;&nbsp;&nbsp;&nbsp;&nbsp; 0.00 &nbsp;&nbsp;&nbsp;&nbsp;&nbsp;&nbsp;&nbsp; 200.00 &nbsp;&nbsp;&nbsp;&nbsp;&nbsp;&nbsp;&nbsp;&nbsp; -- &nbsp;&nbsp;&nbsp;&nbsp;&nbsp;&nbsp;&nbsp; <span style="color:#e22">200.00</span></div>
<div class="L" style="left:118px;top:94px;width:110px"></div>
<div class="l" style="left:231px;top:91px;width:21px"></div>
<div class="t" style="left:7px;top:102px">ชำระโดย ☒ เงินสด ☐ เช็คธนาคาร ☐ อื่นๆ ...............................................................................</div>
<div class="t" style="left:24px;top:108px">☐ ค้างชำระยอดเงินส่วนที่ค้างอยู่ ..................................................................................</div>
<div class="t b" style="left:141px;top:120px">ผู้รับชำระเงิน/ผู้รับ</div>
<div class="t bl b" style="left:207px;top:121px;text-decoration:underline;font-size:3.5px">0811409815x@gmail.com</div>
<div class="l" style="left:177px;top:126px;width:75px;background:#aaa"></div>
<div class="L" style="left:7px;top:160px;width:245px;height:1px"></div>
<div class="t" style="left:7px;top:163px;font-size:3px">Server time: 8/3/2011, 00:00 (GMT+07:00) &nbsp;&nbsp; Printed by: 0811409815x &nbsp;&nbsp;&nbsp;&nbsp;&nbsp;&nbsp;&nbsp;&nbsp;&nbsp;&nbsp;&nbsp;&nbsp;&nbsp;&nbsp;&nbsp;&nbsp;&nbsp;&nbsp;&nbsp;&nbsp;&nbsp;&nbsp;&nbsp;&nbsp;&nbsp;&nbsp;&nbsp;&nbsp;&nbsp;&nbsp;&nbsp;&nbsp;&nbsp;&nbsp;&nbsp;&nbsp;&nbsp;&nbsp;&nbsp;&nbsp;&nbsp;&nbsp;&nbsp;&nbsp;&nbsp;&nbsp;&nbsp;&nbsp;&nbsp;&nbsp;&nbsp;&nbsp;&nbsp;&nbsp;&nbsp;&nbsp;&nbsp;&nbsp;&nbsp;&nbsp;&nbsp;&nbsp;&nbsp;&nbsp;&nbsp;&nbsp;&nbsp;&nbsp;&nbsp;&nbsp;&nbsp;&nbsp;&nbsp;&nbsp;&nbsp;&nbsp;&nbsp;&nbsp;&nbsp;&nbsp;&nbsp;&nbsp;&nbsp;&nbsp;&nbsp;&nbsp;&nbsp;&nbsp; Page 1 of 1</div>
</div>

<div class="lab" style="left:16px;top:827px">รายงานลูกหนี้ค้างชำระ</div>
<div class="lab" style="left:359px;top:827px;width:262px">ใบเสร็จรับเงินการให้ยืม/เช่า/ยืมคีย์การ์ด</div>
</body></html>
